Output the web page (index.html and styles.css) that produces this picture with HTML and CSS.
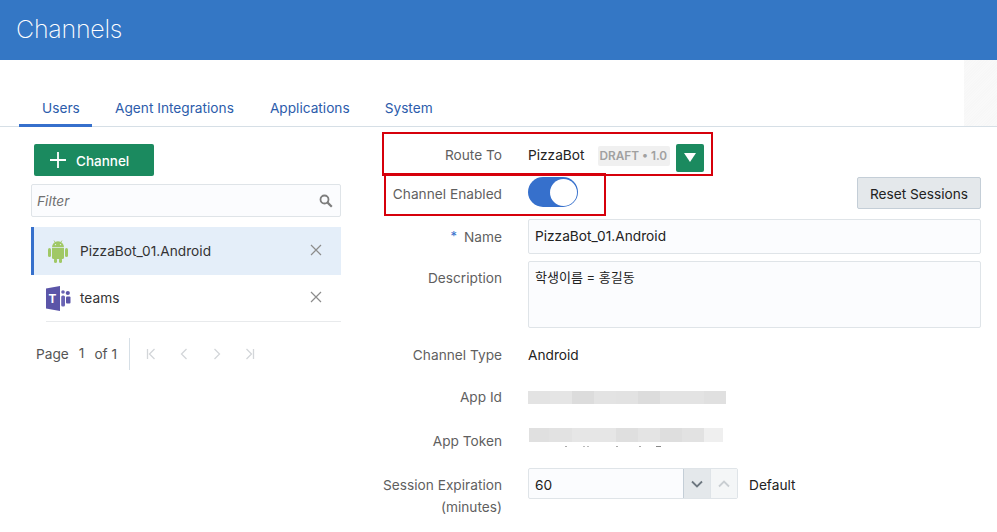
FILE: index.html
```html
<!DOCTYPE html>
<html lang="en">
<head>
  <meta charset="UTF-8" />
  <meta name="viewport" content="width=device-width, initial-scale=1" />
  <title>Channels</title>
  <link rel="stylesheet" href="styles.css">
</head>
<body>
  <header class="page-header">
    <h1>Channels</h1>
  </header>

  <div class="tab-bar">
    <nav class="tabs">
      <a class="tab active" href="#">Users</a>
      <a class="tab" href="#">Agent Integrations</a>
      <a class="tab" href="#">Applications</a>
      <a class="tab" href="#">System</a>
    </nav>
    <div class="hatch"></div>
  </div>

  <main class="content">
    <section class="list-pane">
      <button class="add-btn" type="button">
        <svg width="18" height="18" viewBox="0 0 18 18"><path d="M9 1v16M1 9h16" stroke="#fff" stroke-width="1.800" fill="none"/></svg>
        <span>Channel</span>
      </button>

      <div class="filter">
        <span>Filter</span>
        <svg width="14" height="14" viewBox="0 0 14 14"><circle cx="5.500" cy="5.500" r="4" stroke="#7d7d7d" stroke-width="1.800" fill="none"/><path d="M8.600 8.600l4.200 4.200" stroke="#7d7d7d" stroke-width="2.200" fill="none"/></svg>
      </div>

      <ul class="channels">
        <li class="channel selected">
          <svg class="channel-icon" width="22" height="24" viewBox="0 0 22 24">
            <path d="M5 8.200a6 6 0 0 1 12 0z" fill="#a0c866"/>
            <path d="M7 1.500l1.600 2.600M15 1.500l-1.600 2.600" stroke="#a0c866" stroke-width=".8" fill="none"/>
            <circle cx="8.500" cy="5.600" r=".7" fill="#e4eef9"/>
            <circle cx="13.500" cy="5.600" r=".7" fill="#e4eef9"/>
            <path d="M5 9h12v9.500a1.500 1.500 0 0 1-1.500 1.500h-9A1.500 1.500 0 0 1 5 18.500z" fill="#a0c866"/>
            <rect x="1" y="9" width="3" height="9" rx="1.500" fill="#a0c866"/>
            <rect x="18" y="9" width="3" height="9" rx="1.500" fill="#a0c866"/>
            <rect x="7" y="19" width="3" height="5" rx="1.500" fill="#a0c866"/>
            <rect x="12" y="19" width="3" height="5" rx="1.500" fill="#a0c866"/>
          </svg>
          <span class="channel-name">PizzaBot_01.Android</span>
          <svg class="close" width="12" height="12" viewBox="0 0 12 12"><path d="M1 1l10 10M11 1L1 11" stroke="#8c8c8c" stroke-width="1.200" fill="none"/></svg>
        </li>
        <li class="channel">
          <svg class="channel-icon" width="25" height="25" viewBox="0 0 25 25">
            <path d="M0 2.500L14 0v25L0 22.500z" fill="#5b55a8"/>
            <text x="6.500" y="16.500" text-anchor="middle" class="teams-t">T</text>
            <circle cx="17" cy="6" r="1.800" fill="#6a64b4"/>
            <rect x="15.200" y="9.500" width="3.800" height="11" rx="1.500" fill="#6a64b4"/>
            <circle cx="21.800" cy="7" r="2.100" fill="#5b55a8"/>
            <rect x="20" y="10.500" width="4.500" height="7" rx="1" fill="#5b55a8"/>
          </svg>
          <span class="channel-name">teams</span>
          <svg class="close" width="12" height="12" viewBox="0 0 12 12"><path d="M1 1l10 10M11 1L1 11" stroke="#8c8c8c" stroke-width="1.200" fill="none"/></svg>
        </li>
      </ul>

      <div class="pager">
        <span class="pager-text">Page</span>
        <span class="pager-num">1</span>
        <span class="pager-text">of 1</span>
        <div class="pager-btns">
          <svg width="10" height="12" viewBox="0 0 10 12"><path d="M1.500 1v10M8.500 1L3.500 6l5 5" stroke="#d3d6d9" stroke-width="1.300" fill="none"/></svg>
          <svg width="10" height="12" viewBox="0 0 10 12"><path d="M7.500 1L2.500 6l5 5" stroke="#d3d6d9" stroke-width="1.300" fill="none"/></svg>
          <svg width="10" height="12" viewBox="0 0 10 12"><path d="M2.500 1l5 5-5 5" stroke="#d3d6d9" stroke-width="1.300" fill="none"/></svg>
          <svg width="10" height="12" viewBox="0 0 10 12"><path d="M8.500 1v10M1.500 1l5 5-5 5" stroke="#d3d6d9" stroke-width="1.300" fill="none"/></svg>
        </div>
      </div>
    </section>

    <section class="form">
      <div class="row row-route">
        <label>Route To</label>
        <div class="value">
          <span class="bot">PizzaBot</span>
          <span class="draft">DRAFT • 1.0</span>
          <button class="route-btn" type="button"><i class="caret"></i></button>
        </div>
      </div>

      <div class="row row-enabled">
        <label>Channel Enabled</label>
        <div class="value split">
          <div class="toggle"><i class="knob"></i></div>
          <button class="reset-btn" type="button">Reset Sessions</button>
        </div>
      </div>

      <div class="row row-name">
        <label><sup class="req">*</sup>Name</label>
        <div class="field">PizzaBot_01.Android</div>
      </div>

      <div class="row row-desc">
        <label>Description</label>
        <div class="field area">학생이름 = 홍길동</div>
      </div>

      <div class="row row-text">
        <label>Channel Type</label>
        <div class="value">Android</div>
      </div>

      <div class="row row-text">
        <label>App Id</label>
        <div class="value"><div class="blur blur-id"></div></div>
      </div>

      <div class="row row-text">
        <label>App Token</label>
        <div class="value token">
          <div class="blur blur-token"></div>
          <div class="specks"></div>
        </div>
      </div>

      <div class="row row-session">
        <label>Session Expiration<br>(minutes)</label>
        <div class="value">
          <div class="stepper">
            <span class="stepper-val">60</span>
            <span class="step down"><svg width="12" height="8" viewBox="0 0 12 8"><path d="M1 1.500l5 5 5-5" stroke="#6d7780" stroke-width="1.800" fill="none"/></svg></span>
            <span class="step up"><svg width="12" height="8" viewBox="0 0 12 8"><path d="M1 6.500l5-5 5 5" stroke="#c9ced2" stroke-width="1.800" fill="none"/></svg></span>
          </div>
          <span class="default">Default</span>
        </div>
      </div>
    </section>
  </main>

  <div class="mark mark-route"></div>
  <div class="mark mark-enabled"></div>
</body>
</html>
```

FILE: styles.css
```css
* {
  box-sizing: border-box;
}

html, body {
  height: 100%;
}

body {
  margin: 0;
  font-family: Inter, "Noto Sans CJK KR", sans-serif;
  font-size: 13.7px;
  color: #333;
  background-color: white;
  overflow: hidden;
  position: relative;
}

.page-header {
  height: 60px;
  background-color: #3477c5;
  display: flex;
  align-items: center;
  padding-left: 16px;
}

.page-header h1 {
  margin: 0 0 2px;
  font-family: Inter, sans-serif;
  font-size: 25px;
  font-weight: 200;
  letter-spacing: -0.25px;
  color: white;
}

.tab-bar {
  display: flex;
  justify-content: space-between;
  height: 67px;
  border-bottom: 1px solid #d6dfe6;
}

.tabs {
  display: flex;
  align-items: flex-end;
  padding-left: 19px;
}

.tab {
  display: block;
  height: 34px;
  padding: 8px 18px 0;
  color: #2c5cab;
  text-decoration: none;
  line-height: 17px;
}

.tab.active {
  width: 73px;
  height: 35px;
  margin: 0 5px -1px 0;
  padding: 8px 0 0 23px;
  border-bottom: 3px solid #3670cc;
}

.tab:nth-child(3) {
  padding-right: 17px;
}

.hatch {
  width: 33px;
  background: repeating-linear-gradient(135deg, #f7f7f7 0 1px, #f9f9f9 1px 2px);
}

.content {
  display: flex;
  padding: 17px 16px 0 31px;
}

.list-pane {
  width: 310px;
  flex-shrink: 0;
}

.add-btn {
  display: flex;
  align-items: center;
  gap: 9px;
  width: 120px;
  height: 32px;
  margin-left: 3px;
  padding: 0 0 0 15px;
  background-color: #1b8a5f;
  border: none;
  border-radius: 2px;
  color: white;
  font-family: inherit;
  font-size: 13.5px;
  font-weight: 500;
}

.add-btn span {
  margin-top: 2px;
}

.filter {
  display: flex;
  justify-content: space-between;
  align-items: center;
  height: 33px;
  margin-top: 8px;
  padding: 0 7px 0 5px;
  background-color: #fbfcfe;
  border: 1px solid #dfe4e8;
  border-radius: 2px;
  font-style: italic;
  color: #707070;
}

.channels {
  list-style: none;
  margin: 10px 0 0;
  padding: 0;
}

.channel {
  position: relative;
  display: flex;
  align-items: center;
  height: 47px;
  padding-left: 15px;
  color: #333;
}

.channel.selected {
  height: 48px;
  padding-left: 13px;
  background-color: #e4eef9;
  border-left: 3px solid #3670cc;
}

.channel:last-child::after {
  content: "";
  position: absolute;
  left: 15px;
  right: 0;
  bottom: 0;
  height: 1px;
  background-color: #e8eaec;
}

.channel-name {
  margin-left: 9px;
  margin-top: -1px;
  flex: 1;
}

.channel.selected .channel-name {
  margin-left: 11px;
}

.channel-icon {
  flex-shrink: 0;
}

.teams-t {
  font-family: "Liberation Sans", sans-serif;
  font-size: 12px;
  font-weight: bold;
  fill: white;
}

.close {
  margin: -3px 19px 0 0;
}

.pager {
  display: flex;
  align-items: center;
  height: 32px;
  margin-top: 16px;
  padding-left: 5px;
  color: #555;
}

.pager-num {
  margin: -3px 10px 0 10px;
}

.pager-btns {
  display: flex;
  align-items: center;
  gap: 23px;
  height: 32px;
  margin-left: 12px;
  padding-left: 16px;
  border-left: 1px solid #d6dfe6;
}

.form {
  flex: 1;
  margin: -1px 0 0 19px;
}

.row {
  display: grid;
  grid-template-columns: 142px 1fr;
  column-gap: 26px;
  align-items: center;
}

.row label {
  text-align: right;
  color: #5f5f5f;
  white-space: nowrap;
}

.value {
  display: flex;
  align-items: center;
}

.row-route {
  height: 29px;
}

.row-route label {
  margin-top: -5px;
}

.bot {
  color: #222;
  margin-top: -5px;
}

.draft {
  margin: -3px 0 0 13px;
  padding: 0 3px 0 2px;
  height: 20px;
  line-height: 20px;
  background-color: #f0f0f0;
  border-radius: 2px;
  color: #a0a0a0;
  font-size: 11.800px;
  font-weight: 600;
}

.route-btn {
  display: flex;
  align-items: center;
  justify-content: center;
  width: 28px;
  height: 28px;
  margin-left: 6px;
  padding: 0;
  background-color: #1b8a5f;
  border: none;
  border-radius: 2px;
}

.caret {
  width: 0;
  height: 0;
  border-left: 6px solid transparent;
  border-right: 6px solid transparent;
  border-top: 9px solid white;
}

.row-enabled {
  height: 32px;
  margin-top: 5px;
}

.row-enabled label {
  margin-top: 2px;
}

.split {
  justify-content: space-between;
}

.toggle {
  display: flex;
  justify-content: flex-end;
  align-items: center;
  width: 50px;
  height: 30px;
  margin-top: -2px;
  padding-right: 1px;
  background-color: #3670cc;
  border-radius: 15px;
}

.knob {
  width: 27px;
  height: 27px;
  background-color: white;
  border-radius: 50%;
}

.reset-btn {
  width: 124px;
  height: 32px;
  padding: 1px 0 0;
  background-color: #e4e8eb;
  border: 1px solid #c4ced7;
  border-radius: 2px;
  font-family: inherit;
  font-size: 13.7px;
  color: #222;
}

.row-name {
  height: 33px;
  margin-top: 10px;
}

.row-name label {
  margin-top: 1px;
}

.req {
  color: #3670cc;
  margin-right: 7px;
  font-size: 13px;
  line-height: 0;
  vertical-align: 1px;
}

.field {
  height: 100%;
  padding: 0 6px;
  line-height: 33px;
  background-color: #fbfcfe;
  border: 1px solid #dfe4e8;
  border-radius: 2px;
  color: #222;
}

.row-desc {
  height: 67px;
  margin-top: 9px;
  align-items: start;
}

.row-desc label {
  padding-top: 9px;
}

.field.area {
  font-size: 13px;
  line-height: 31px;
}

.row-text {
  height: 28px;
  margin-top: 14px;
  color: #222;
}

.row-desc + .row-text {
  margin-top: 13px;
}

.row-text:nth-child(7) {
  margin-top: 16px;
}

.blur {
  height: 13px;
}

.blur-id {
  width: 198px;
  background: linear-gradient(to right,
    #e3e3e3 0 22px, #e5e5e5 22px 44px, #dcdcdc 44px 66px, #e3e3e3 66px 88px,
    #e2e2e2 88px 110px, #dcdcdc 110px 132px, #e3e3e3 132px 176px, #e0e0e0 176px);
}

.token {
  display: block;
  padding: 1px 0 0 1px;
  height: 28px;
  overflow: hidden;
}

.blur-token {
  height: 14px;
  width: 194px;
  background: linear-gradient(to right,
    #e0e0e0 0 20px, #e2e2e2 20px 43px, #e6e6e6 43px 87px, #dfdfdf 87px 109px,
    #e4e4e4 109px 131px, #dedede 131px 153px, #e2e2e2 153px 175px, #efefef 175px);
}

/* tops of the next line of the token, cut off by the field */
.specks {
  width: 194px;
  height: 1px;
  margin-top: 4px;
  background: linear-gradient(to right,
    transparent 0 36px, #aaa 36px 38px, transparent 38px 54px, #bbb 54px 56px,
    transparent 56px 58px, #bbb 58px 60px, transparent 60px 87px, #aaa 87px 89px,
    transparent 89px 110px, #aaa 110px 112px, transparent 112px 127px, #888 127px 132px,
    transparent 132px);
}

.row-session {
  margin-top: 13px;
  align-items: start;
}

.row-session label {
  padding-top: 6px;
  line-height: 22px;
}

.stepper {
  display: flex;
  width: 210px;
  height: 31px;
  background-color: #fbfcfe;
  border: 1px solid #dfe4e8;
  border-radius: 2px;
}

.stepper-val {
  flex: 1;
  padding-left: 6px;
  line-height: 33px;
  color: #222;
}

.step {
  display: flex;
  align-items: center;
  justify-content: center;
  height: 100%;
}

.step.down {
  width: 27px;
  background-color: #e4e8eb;
  border-left: 1px solid #c4ced7;
}

.step.up {
  width: 27px;
  background-color: #f4f6f7;
  border-left: 1px solid #dfe4e8;
}

.default {
  margin: 2px 0 0 11px;
  color: #222;
}

/* red annotation boxes drawn on top of the screenshot */
.mark {
  position: absolute;
  border: 2px solid #d6000b;
}

.mark-route {
  left: 382px;
  top: 132px;
  width: 331px;
  height: 44px;
}

.mark-enabled {
  left: 384px;
  top: 173px;
  width: 222px;
  height: 43px;
}
```
